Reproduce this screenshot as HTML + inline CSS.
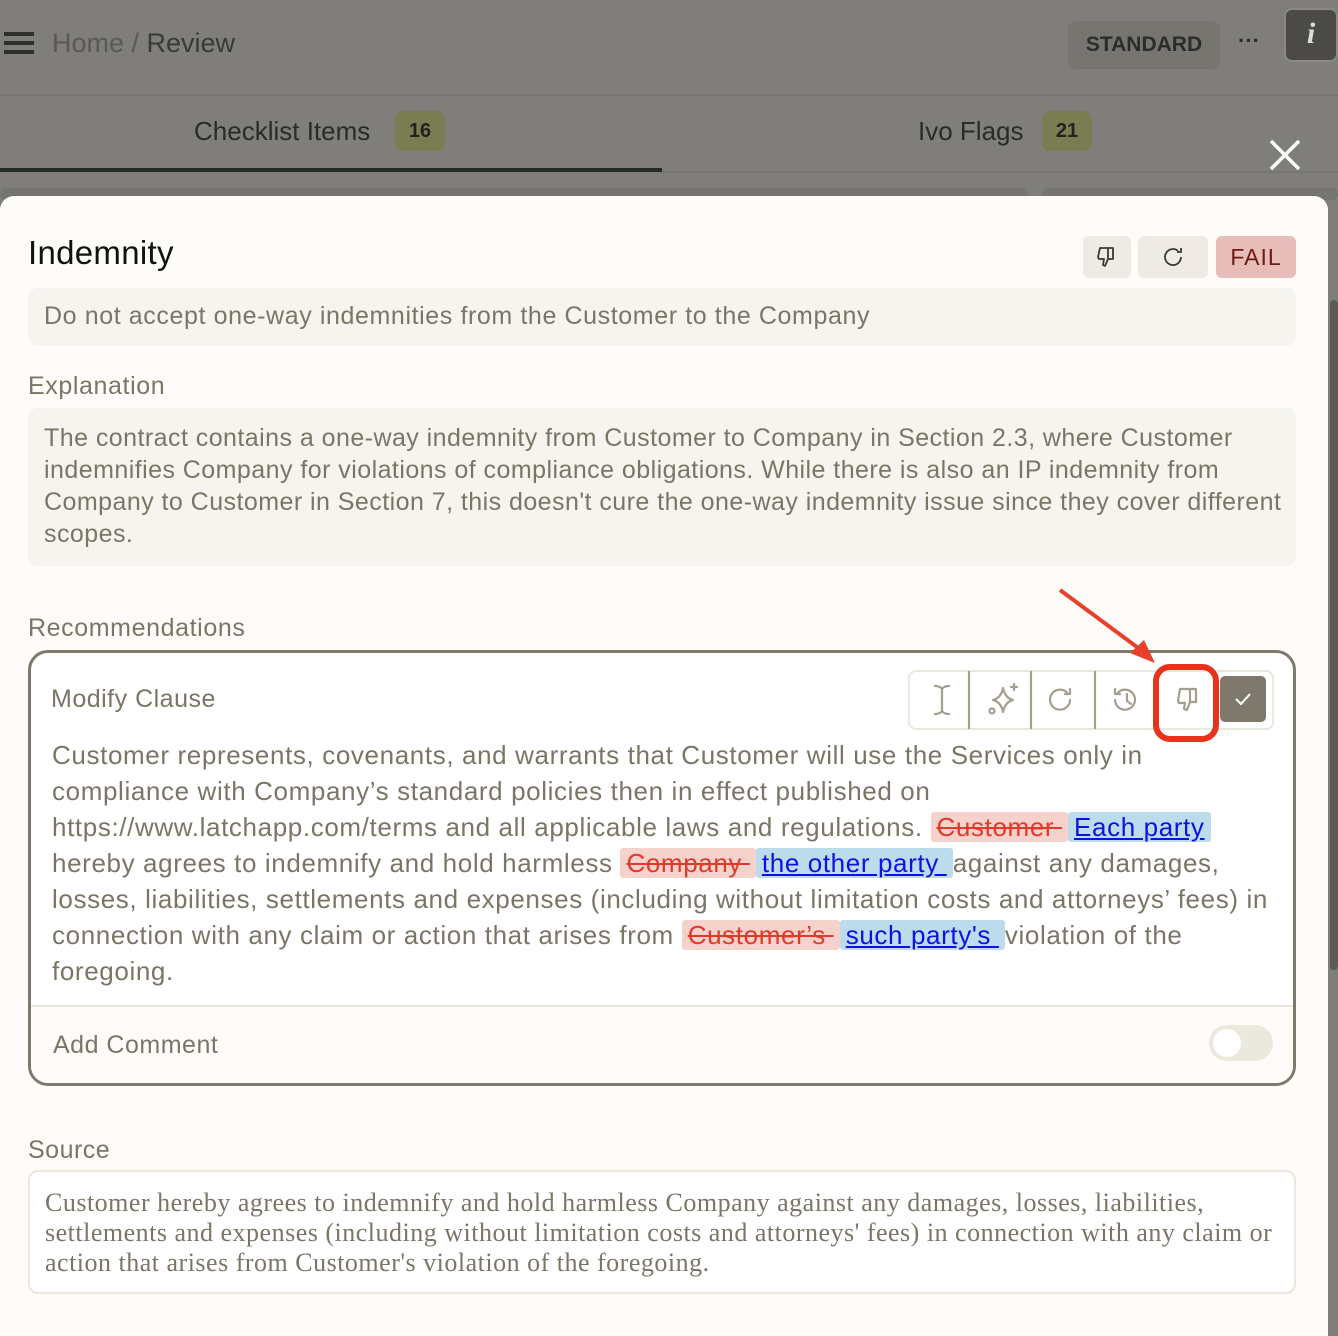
<!DOCTYPE html>
<html><head><meta charset="utf-8"><style>
*{margin:0;padding:0;box-sizing:border-box}
body{width:1338px;height:1324px;overflow:hidden;background:#7f7e7a;font-family:"Liberation Sans",sans-serif;position:relative}
.a{position:absolute;white-space:nowrap}
.modal{position:absolute;left:0;top:196px;width:1328px;height:1140px;background:#fdfcf8;border-radius:14px 14px 0 0}
.t{color:#7a7567}
.box{position:absolute;background:#f6f4ee;border-radius:10px}
.del{background:#f5d2cc;color:#e03a2a;text-decoration:line-through;border-radius:3px;padding:0 6px}
.ins{background:#bcdcee;color:#1010e0;text-decoration:underline;border-radius:3px;padding:0 6px}
.btn{position:absolute;background:#efebe4;border-radius:6px}
</style></head><body>
<div class="a" style="left:4px;top:32px;width:30px;height:4px;background:#2e2e2a;box-shadow:0 9px 0 #2e2e2a,0 18px 0 #2e2e2a"></div>
<div class="a" style="left:52px;top:28px;font-size:27px;color:#5a5852">Home / <span style="color:#3a3934">Review</span></div>
<div class="a" style="left:1068px;top:21px;width:152px;height:48px;background:#76756f;border-radius:8px;font-size:21px;font-weight:bold;color:#2d2c28;text-align:center;line-height:48px">STANDARD</div>
<div class="a" style="left:1238px;top:28px;font-size:22px;color:#2d2c28;font-weight:bold">···</div>
<div class="a" style="left:1284px;top:8px;width:54px;height:54px;background:#4b4a47;border:2px solid #8a8985;border-radius:8px;color:#ddd;font:italic bold 30px 'Liberation Serif',serif;text-align:center;line-height:48px">i</div>
<div class="a" style="left:0;top:94px;width:1338px;height:2px;background:#75746f"></div>
<div class="a" style="left:194px;top:116px;font-size:26px;color:#2a2a26">Checklist Items</div>
<div class="a" style="left:395px;top:111px;width:50px;height:40px;background:#7a7d52;border-radius:8px;font-size:20px;font-weight:bold;color:#222;text-align:center;line-height:40px">16</div>
<div class="a" style="left:918px;top:116px;font-size:26px;color:#2a2a26">Ivo Flags</div>
<div class="a" style="left:1042px;top:111px;width:50px;height:40px;background:#7a7d52;border-radius:8px;font-size:20px;font-weight:bold;color:#222;text-align:center;line-height:40px">21</div>
<div class="a" style="left:0;top:168px;width:662px;height:4px;background:#252a22"></div>
<div class="a" style="left:662px;top:171px;width:676px;height:2px;background:#75746f"></div>
<svg class="a" style="left:1268px;top:138px" width="34" height="34"><path d="M3 3L31 31M31 3L3 31" stroke="#fff" stroke-width="3.5"/></svg>
<div class="a" style="left:0;top:188px;width:1028px;height:12px;background:#75746f;border-radius:8px"></div>
<div class="a" style="left:1042px;top:188px;width:296px;height:12px;background:#75746f;border-radius:8px"></div>
<div class="a" style="left:1330px;top:300px;width:8px;height:670px;background:#5b5a57;border-radius:4px"></div>

<div class="modal">
<div class="a" style="left:28px;top:38px;font-size:33px;color:#111;letter-spacing:0.3px">Indemnity</div>
<div class="btn" style="left:1083px;top:40px;width:48px;height:42px"><svg width="48" height="42"><path d="M17 12h13v11h-5l-3 7-2-1 1-6h-5l-1-2z M25 12v11" fill="none" stroke="#3a3934" stroke-width="1.8" stroke-linejoin="round"/></svg></div>
<div class="btn" style="left:1138px;top:40px;width:70px;height:42px"><svg width="70" height="42"><path d="M43 21a8 8 0 1 1-3-6.2M43 12v4h-4" fill="none" stroke="#3a3934" stroke-width="1.8"/></svg></div>
<div class="btn" style="left:1216px;top:40px;width:80px;height:42px;background:#e8bcb8;color:#6b1b16;font-size:23px;text-align:center;line-height:42px;letter-spacing:1px">FAIL</div>
<div class="box" style="left:28px;top:92px;width:1268px;height:58px"></div>
<div class="a t" style="left:44px;top:106px;font-size:25px;letter-spacing:0.6px">Do not accept one-way indemnities from the Customer to the Company</div>
<div class="a t" style="left:28px;top:176px;font-size:25px;letter-spacing:0.6px">Explanation</div>
<div class="box" style="left:28px;top:212px;width:1268px;height:158px"></div>
<div class="a t" style="left:44px;top:226px;font-size:25px;line-height:32px;letter-spacing:0.45px">The contract contains a one-way indemnity from Customer to Company in Section 2.3, where Customer<br>indemnifies Company for violations of compliance obligations. While there is also an IP indemnity from<br>Company to Customer in Section 7, this doesn't cure the one-way indemnity issue since they cover different<br>scopes.</div>
<div class="a t" style="left:28px;top:418px;font-size:25px;letter-spacing:0.6px">Recommendations</div>
<div class="a" style="left:28px;top:454px;width:1268px;height:436px;border:3px solid #7e796c;border-radius:20px;background:#fff;overflow:hidden">
  <div class="a t" style="left:20px;top:32px;font-size:25px;letter-spacing:0.5px">Modify Clause</div>
  <div class="a" style="left:877px;top:17px;width:366px;height:60px;border:2px solid #ebe7dc;border-radius:8px"></div>
  <svg class="a" style="left:877px;top:17px" width="366" height="60">
    <g fill="none" stroke="#a49e8e" stroke-width="2.2" stroke-linecap="round" stroke-linejoin="round">
      <path d="M61 2v56M123 2v56M187 2v56"/>
      <path d="M27 16q5 0 7 3q2-3 7-3M34 19v22M27 44q5 0 7-3q2 3 7 3"/>
      <path d="M95 18q2 10 10 12q-8 2-10 12q-2-10-10-12q8-2 10-12zM106 14v6M103 17h6"/><circle cx="84" cy="41" r="2.5"/>
      <path d="M162 30a10 10 0 1 1-3-7.5M162 19v5h-5"/>
      <path d="M207 30a10 10 0 1 0 3-7.5M207 19v5h5M219 24v7l4 3"/>
      <path d="M272 19h16v13h-6l-3 8-3-1 1-6h-6l-1-2zM282 19v13"/>
    </g>
  </svg>
  <div class="a" style="left:1189px;top:23px;width:46px;height:46px;background:#7e796c;border-radius:5px"><svg width="46" height="46"><path d="M16 23l5 5 9-10" fill="none" stroke="#fff" stroke-width="2"/></svg></div>
  <div class="a t" style="left:21px;top:84px;font-size:26px;line-height:36px;letter-spacing:0.62px">Customer represents, covenants, and warrants that Customer will use the Services only in<br>compliance with Company’s standard policies then in effect published on<br>https://www.latchapp.com/terms and all applicable laws and regulations. <span class="del">Customer </span> <span class="ins">Each party </span><br>hereby agrees to indemnify and hold harmless <span class="del">Company </span> <span class="ins">the other party </span>against any damages,<br>losses, liabilities, settlements and expenses (including without limitation costs and attorneys’ fees) in<br>connection with any claim or action that arises from <span class="del">Customer’s </span> <span class="ins">such party's </span>violation of the<br>foregoing.</div>
  <div class="a" style="left:0;top:352px;width:1268px;height:84px;background:#fdfcf8;border-top:2px solid #ebe7dc"></div>
  <div class="a t" style="left:22px;top:378px;font-size:25px;letter-spacing:0.5px">Add Comment</div>
  <div class="a" style="left:1178px;top:372px;width:64px;height:36px;background:#ebe8de;border-radius:18px"><div style="position:absolute;left:4px;top:4px;width:28px;height:28px;background:#fff;border-radius:50%"></div></div>
</div>
<div class="a t" style="left:28px;top:940px;font-size:25px;letter-spacing:0.5px">Source</div>
<div class="a" style="left:28px;top:974px;width:1268px;height:124px;border:2px solid #ebe7dc;border-radius:10px;background:#fff"></div>
<div class="a t" style="left:45px;top:992px;font:26px/30px 'Liberation Serif',serif;color:#7a7567;letter-spacing:0.5px">Customer hereby agrees to indemnify and hold harmless Company against any damages, losses, liabilities,<br>settlements and expenses (including without limitation costs and attorneys' fees) in connection with any claim or<br>action that arises from Customer's violation of the foregoing.</div>
</div>
<svg class="a" style="left:1050px;top:585px" width="230" height="160">
<path d="M10 5L95 68" stroke="#e8402a" stroke-width="4"/><path d="M105 78L80 68L94 55z" fill="#e8402a"/>
<rect x="106" y="82" width="60" height="72" rx="14" fill="none" stroke="#e8321c" stroke-width="6"/>
</svg>
</body></html>
